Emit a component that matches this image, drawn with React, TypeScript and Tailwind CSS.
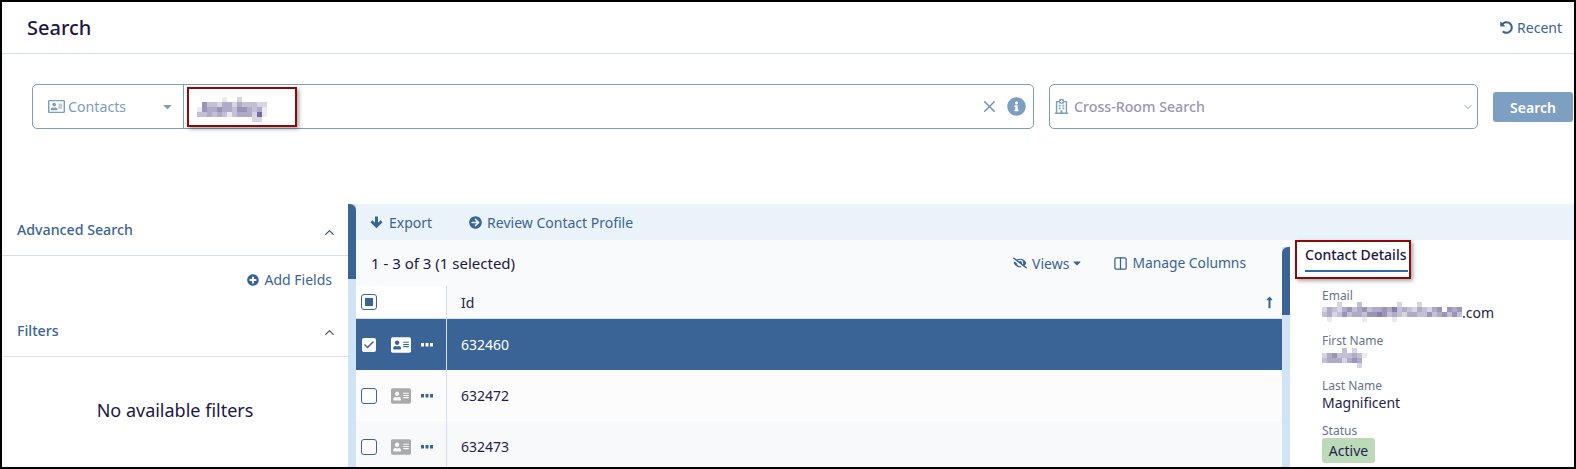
import {
  FaAddressCard,
  FaArrowCircleRight,
  FaCaretDown,
  FaEyeSlash,
  FaInfoCircle,
  FaLongArrowAltUp,
  FaPlusCircle,
  FaRegAddressCard,
  FaRegHospital,
  FaUndoAlt,
} from 'react-icons/fa'
import { Check, ChevronDown, ChevronUp, Columns2, X } from 'lucide-react'

// redacted values in the screenshot, one digit per 5px cell (opacity 0-9)
const smudgeName = [
  '00000100200000',
  '05332442433322',
  '15445443554341',
  '33434313444271',
  '00000000000220',
]
const smudgeEmail = [
  '0002000300000002000200000000',
  '2432453453445463432432450545',
  '3423534435565343244335345353',
  '0100000010000010000000000000',
]
const smudgeFirst = [
  '000030200',
  '245333431',
  '344424540',
  '000000020',
]

function Smudge({ rows }: { rows: string[] }) {
  const w = rows[0].length * 5
  const h = rows.length * 5
  return (
    <svg width={w} height={h} viewBox={`0 0 ${w} ${h}`} className="block">
      {rows.map((row, y) =>
        row.split('').map((c, x) => (
          <rect key={`${x}-${y}`} x={x * 5} y={y * 5} width="5" height="5" fill="#4b3f80" opacity={Number(c) / 9} />
        )),
      )}
    </svg>
  )
}

function Dots({ color }: { color: string }) {
  return (
    <svg width="12" height="4" viewBox="0 0 12 4" className="block">
      <rect x="0" y="0" width="3" height="3.5" fill={color} />
      <rect x="4.5" y="0" width="3" height="3.5" fill={color} />
      <rect x="9" y="0" width="3" height="3.5" fill={color} />
    </svg>
  )
}

const rows = [
  { id: '632460', selected: true, bg: 'bg-[#3a6496]' },
  { id: '632472', selected: false, bg: 'bg-[#fcfcfc]' },
  { id: '632473', selected: false, bg: 'bg-[#f8f9fa]' },
]

function Row({ id, selected, bg }: { id: string; selected: boolean; bg: string }) {
  return (
    <div className={`flex h-[51px] ${bg}`}>
      <div className="flex w-[91px] items-center border-r border-[#d5dfea] pl-[6px]">
        {selected ? (
          <span className="flex h-[14px] w-[14px] items-center justify-center rounded-[2px] bg-white">
            <Check size={12} strokeWidth={3} className="text-[#3a6496]" />
          </span>
        ) : (
          <span className="-ml-[1px] mr-[-1px] h-4 w-4 rounded-[3px] border border-[#3a6496] bg-white" />
        )}
        <FaAddressCard size={20} className={selected ? 'ml-[15px] text-white' : 'ml-[15px] text-[#ababab]'} />
        <span className="ml-[10px]">
          <Dots color={selected ? '#ffffff' : '#3a6496'} />
        </span>
      </div>
      <div className={`flex items-center pl-[14px] text-[14px] ${selected ? 'text-white' : 'text-[#241d4f]'}`}>{id}</div>
    </div>
  )
}

function Field({ label, value, children }: { label: string; value?: string; children?: React.ReactNode }) {
  return (
    <div className="h-[45px]">
      <div className="h-[15px] text-[12px] leading-[16px] text-[#67728c]">{label}</div>
      {value ? <div className="text-[14px] leading-[19px] text-[#241d4f]">{value}</div> : children}
    </div>
  )
}

export default function App() {
  return (
    <div className="relative h-[469px] w-[1576px] overflow-hidden border-2 border-black bg-white font-['Noto_Sans',sans-serif] text-[#241d4f]">
      {/* Header */}
      <header className="flex h-[52px] items-center justify-between border-b border-[#d5dfea] pl-[25px] pr-[12px]">
        <h1 className="text-[20px] font-medium text-[#1d1548]">Search</h1>
        <a className="flex items-center gap-[4px] text-[14px] text-[#3a6496]">
          <FaUndoAlt size={13} />
          Recent
        </a>
      </header>

      {/* Search row */}
      <div className="mt-[30px] flex h-[45px] pl-[30px]">
        <div className="flex w-[1002px] rounded-[5px] border border-[#7c9ebf]">
          <div className="flex w-[151px] items-center border-r border-[#7c9ebf] pl-[15px] text-[14.2px] text-[#7f9cbd]">
            <FaRegAddressCard size={17} className="text-[#7f9cbd]" />
            <span className="ml-[3px]">Contacts</span>
            <FaCaretDown size={13} className="ml-[35px] text-[#7f9cbd]" />
          </div>
          <div className="flex flex-1 items-center pl-[13px]">
            <div className="mt-[6px]">
              <Smudge rows={smudgeName} />
            </div>
            <div className="ml-auto flex items-center gap-[8px] pr-[7px]">
              <X size={19} strokeWidth={1.8} className="text-[#6d90b3]" />
              <FaInfoCircle size={19} className="text-[#7c9ebf]" />
            </div>
          </div>
        </div>
        <div className="ml-[15px] flex w-[429px] items-center rounded-[5px] border border-[#7c9ebf] pl-[4px] text-[14.2px] font-medium text-[#9a95b0]">
          <FaRegHospital size={15} className="text-[#7c9ebf]" />
          <span className="ml-[5px]">Cross-Room Search</span>
          <ChevronDown size={12} className="ml-auto mr-[3px] text-[#7c9ebf]" />
        </div>
        <button className="ml-[15px] mt-[8px] h-[30px] w-[80px] rounded-[3px] bg-[#7c9fc2] text-[14px] font-semibold text-white">
          Search
        </button>
      </div>

      {/* Main area */}
      <div className="mt-[75px] flex h-[264px]">
        <aside className="w-[346px]">
          <div className="flex h-[52px] items-center justify-between border-b border-[#d5dfea] pl-[15px] pr-[11px]">
            <span className="text-[14.2px] font-medium text-[#3a6496]">Advanced Search</span>
            <ChevronUp size={15} className="mt-[5px] text-[#45506a]" />
          </div>
          <div className="flex h-[47px] items-center justify-end pr-[16px] text-[14px] text-[#3a6496]">
            <FaPlusCircle size={12} className="mr-[5px]" />
            Add Fields
          </div>
          <div className="flex h-[54px] items-center justify-between border-b border-[#dfe3ea] pl-[15px] pr-[11px] pt-[3px]">
            <span className="text-[14.2px] font-medium text-[#3a6496]">Filters</span>
            <ChevronUp size={15} className="mt-[2px] text-[#45506a]" />
          </div>
          <div className="pt-[41px] text-center text-[18px] leading-[24px] text-[#1d1548]">No available filters</div>
        </aside>

        <div className="w-2 bg-[#d0e4f5]">
          <div className="h-[75px] rounded-tr-[6px] bg-[#3a6496]" />
        </div>

        <section className="flex-1">
          <div className="flex h-[36px] items-center bg-[#eaf2fa] pl-[14px] text-[14px] text-[#3a6496]">
            {/* heavy down arrow */}
            <svg width="13" height="13" viewBox="0 0 13 13" className="mr-[6px]" fill="currentColor">
              <path d="M5 0.5h3v6.3l2.6-2.5 1.9 1.9-6 6-6-6 1.9-1.9L5 6.8z" />
            </svg>
            Export
            <FaArrowCircleRight size={13} className="ml-[37px] mr-[5px]" />
            Review Contact Profile
          </div>
          <div className="flex">
            <div className="w-[926px]">
              <div className="flex h-[46px] items-center bg-[#f8fafc] pl-[15px] pr-[36px] text-[#1d1548]">
                <span className="text-[15px]">1 - 3 of 3 (1 selected)</span>
                <span className="ml-auto flex items-center text-[14px] text-[#3a6496]">
                  <FaEyeSlash size={14} className="mr-[5px]" />
                  Views
                  <FaCaretDown size={12} className="ml-[2px]" />
                </span>
                <span className="ml-[30px] flex items-center text-[13.8px] text-[#3a6496]">
                  <Columns2 size={15} className="mr-[4px]" />
                  Manage Columns
                </span>
              </div>
              <div className="flex h-[33px] border-b border-[#d5dfea]">
                <div className="flex w-[91px] items-center border-r border-[#d5dfea] bg-white pl-[5px]">
                  <span className="flex h-4 w-4 items-center justify-center rounded-[3px] border border-[#3a6496]">
                    <span className="h-2 w-2 bg-[#3a6496]" />
                  </span>
                </div>
                <div className="flex flex-1 items-center justify-between bg-[#f8fafc] pl-[14px] pr-[6px] text-[14px]">
                  Id
                  <FaLongArrowAltUp size={13} className="text-[#3a6496]" />
                </div>
              </div>
              {rows.map((row) => (
                <Row key={row.id} {...row} />
              ))}
            </div>

            <div className="mt-[7px] h-[220px] w-2 bg-[#d0e4f5]">
              <div className="h-[68px] rounded-tl-[6px] bg-[#3a6496]" />
            </div>

            <div className="flex-1 pl-[15px]">
              <div className="h-[32px] w-[103px] border-b-2 border-[#2a6aab] pt-[5px] text-[14px] font-medium leading-[20px] text-[#1d1548]">
                Contact Details
              </div>
              <div className="pl-[17px] pt-[16px]">
                <Field label="Email">
                  <div className="-mt-[1px] flex items-center">
                    <Smudge rows={smudgeEmail} />
                    <span className="text-[14px] leading-[19px] text-[#241d4f]">.com</span>
                  </div>
                </Field>
                <Field label="First Name">
                  <Smudge rows={smudgeFirst} />
                </Field>
                <Field label="Last Name" value="Magnificent" />
                <Field label="Status">
                  <span className="block w-[53px] rounded-[3px] bg-[#bcdab8] text-center text-[14px] leading-[25px] text-[#241d4f]">
                    Active
                  </span>
                </Field>
              </div>
            </div>
          </div>
        </section>
      </div>

      {/* Red annotation boxes over the screenshot */}
      <div className="absolute left-[185px] top-[85px] h-[40px] w-[110px] border-2 border-[#8b0b0b] shadow-[2px_2px_4px_rgba(0,0,0,0.35)]" />
      <div className="absolute left-[1293px] top-[238px] h-[39px] w-[116px] border-2 border-[#8b0b0b] shadow-[2px_2px_4px_rgba(0,0,0,0.35)]" />
    </div>
  )
}
